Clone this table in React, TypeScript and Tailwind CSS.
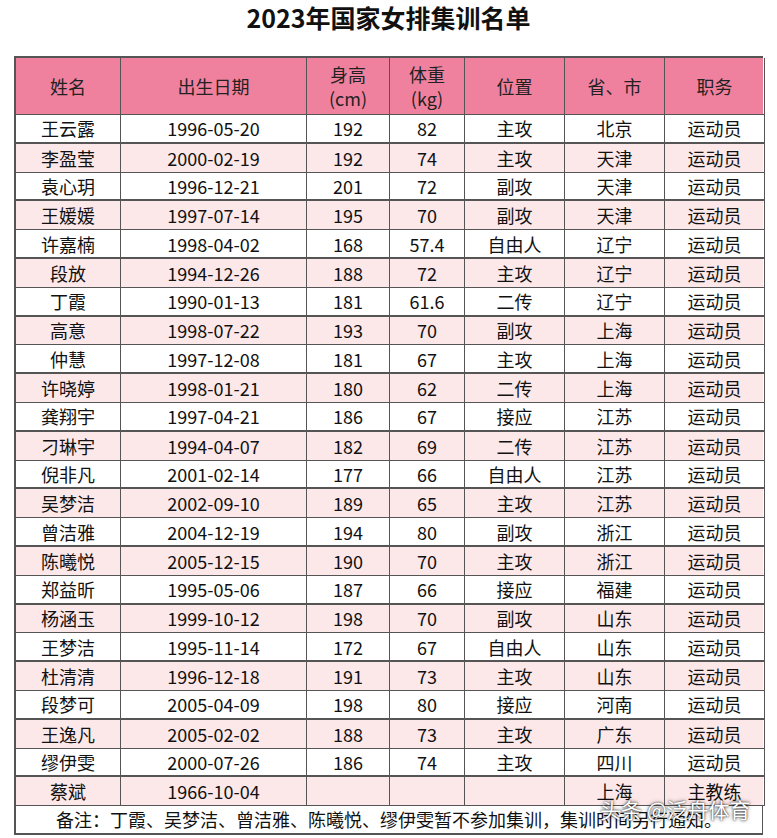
const rows: string[][] = [
  ["王云露", "1996-05-20", "192", "82", "主攻", "北京", "运动员"],
  ["李盈莹", "2000-02-19", "192", "74", "主攻", "天津", "运动员"],
  ["袁心玥", "1996-12-21", "201", "72", "副攻", "天津", "运动员"],
  ["王媛媛", "1997-07-14", "195", "70", "副攻", "天津", "运动员"],
  ["许嘉楠", "1998-04-02", "168", "57.4", "自由人", "辽宁", "运动员"],
  ["段放", "1994-12-26", "188", "72", "主攻", "辽宁", "运动员"],
  ["丁霞", "1990-01-13", "181", "61.6", "二传", "辽宁", "运动员"],
  ["高意", "1998-07-22", "193", "70", "副攻", "上海", "运动员"],
  ["仲慧", "1997-12-08", "181", "67", "主攻", "上海", "运动员"],
  ["许晓婷", "1998-01-21", "180", "62", "二传", "上海", "运动员"],
  ["龚翔宇", "1997-04-21", "186", "67", "接应", "江苏", "运动员"],
  ["刁琳宇", "1994-04-07", "182", "69", "二传", "江苏", "运动员"],
  ["倪非凡", "2001-02-14", "177", "66", "自由人", "江苏", "运动员"],
  ["吴梦洁", "2002-09-10", "189", "65", "主攻", "江苏", "运动员"],
  ["曾洁雅", "2004-12-19", "194", "80", "副攻", "浙江", "运动员"],
  ["陈曦悦", "2005-12-15", "190", "70", "主攻", "浙江", "运动员"],
  ["郑益昕", "1995-05-06", "187", "66", "接应", "福建", "运动员"],
  ["杨涵玉", "1999-10-12", "198", "70", "副攻", "山东", "运动员"],
  ["王梦洁", "1995-11-14", "172", "67", "自由人", "山东", "运动员"],
  ["杜清清", "1996-12-18", "191", "73", "主攻", "山东", "运动员"],
  ["段梦可", "2005-04-09", "198", "80", "接应", "河南", "运动员"],
  ["王逸凡", "2005-02-02", "188", "73", "主攻", "广东", "运动员"],
  ["缪伊雯", "2000-07-26", "186", "74", "主攻", "四川", "运动员"],
  ["蔡斌", "1966-10-04", "", "", "", "上海", "主教练"],
];

const cols = "grid grid-cols-[105px_186px_83px_75px_100px_100px_100px]";

export default function App() {
  return (
    <div className="w-[777px] h-[838px] bg-white text-[#111] font-['Noto_Sans_CJK_SC','Noto_Sans',sans-serif] relative">
      <h1 className="h-[56px] pt-[2px] text-center text-[25px] font-bold leading-[30px]">
        2023年国家女排集训名单
      </h1>
      <div className="ml-[14px] w-[749px] border-t-2 border-l-2 border-[#555]">
        <div className={`${cols} h-[57px] bg-[#f0819e] text-[18px] text-[#222]`}>
          {["姓名", "出生日期", "身高|(cm)", "体重|(kg)", "位置", "省、市", "职务"].map((h, i) => (
            <div
              key={i}
              className="flex flex-col items-center justify-center border-r border-b border-[#555] leading-[24px]"
            >
              {h.split("|").map((t) => (
                <span key={t}>{t}</span>
              ))}
            </div>
          ))}
        </div>
        {rows.map((r, i) => (
          <div
            key={i}
            className={`${cols} h-[28.8px] text-[18px] ${i % 2 === 0 ? "bg-white" : "bg-[#fde8e9]"}`}
          >
            {r.map((c, j) => (
              <div
                key={j}
                className={`flex items-center justify-center border-r border-[#555] leading-none ${
                  i % 2 === 0 ? "border-b-2" : "border-b"
                }`}
              >
                {c}
              </div>
            ))}
          </div>
        ))}
        <div className="h-[29px] flex items-center justify-center text-[18px] border-r border-b-2 border-[#555] bg-white">
          备注：丁霞、吴梦洁、曾洁雅、陈曦悦、缪伊雯暂不参加集训，集训时间另行通知。
        </div>
      </div>
      <div className="absolute left-[600px] top-[799px] text-[21px] leading-none text-white [text-shadow:0_0_2px_rgba(0,0,0,0.9),0_0_4px_rgba(0,0,0,0.5)]">
        头条 @泛舟体育
      </div>
    </div>
  );
}
